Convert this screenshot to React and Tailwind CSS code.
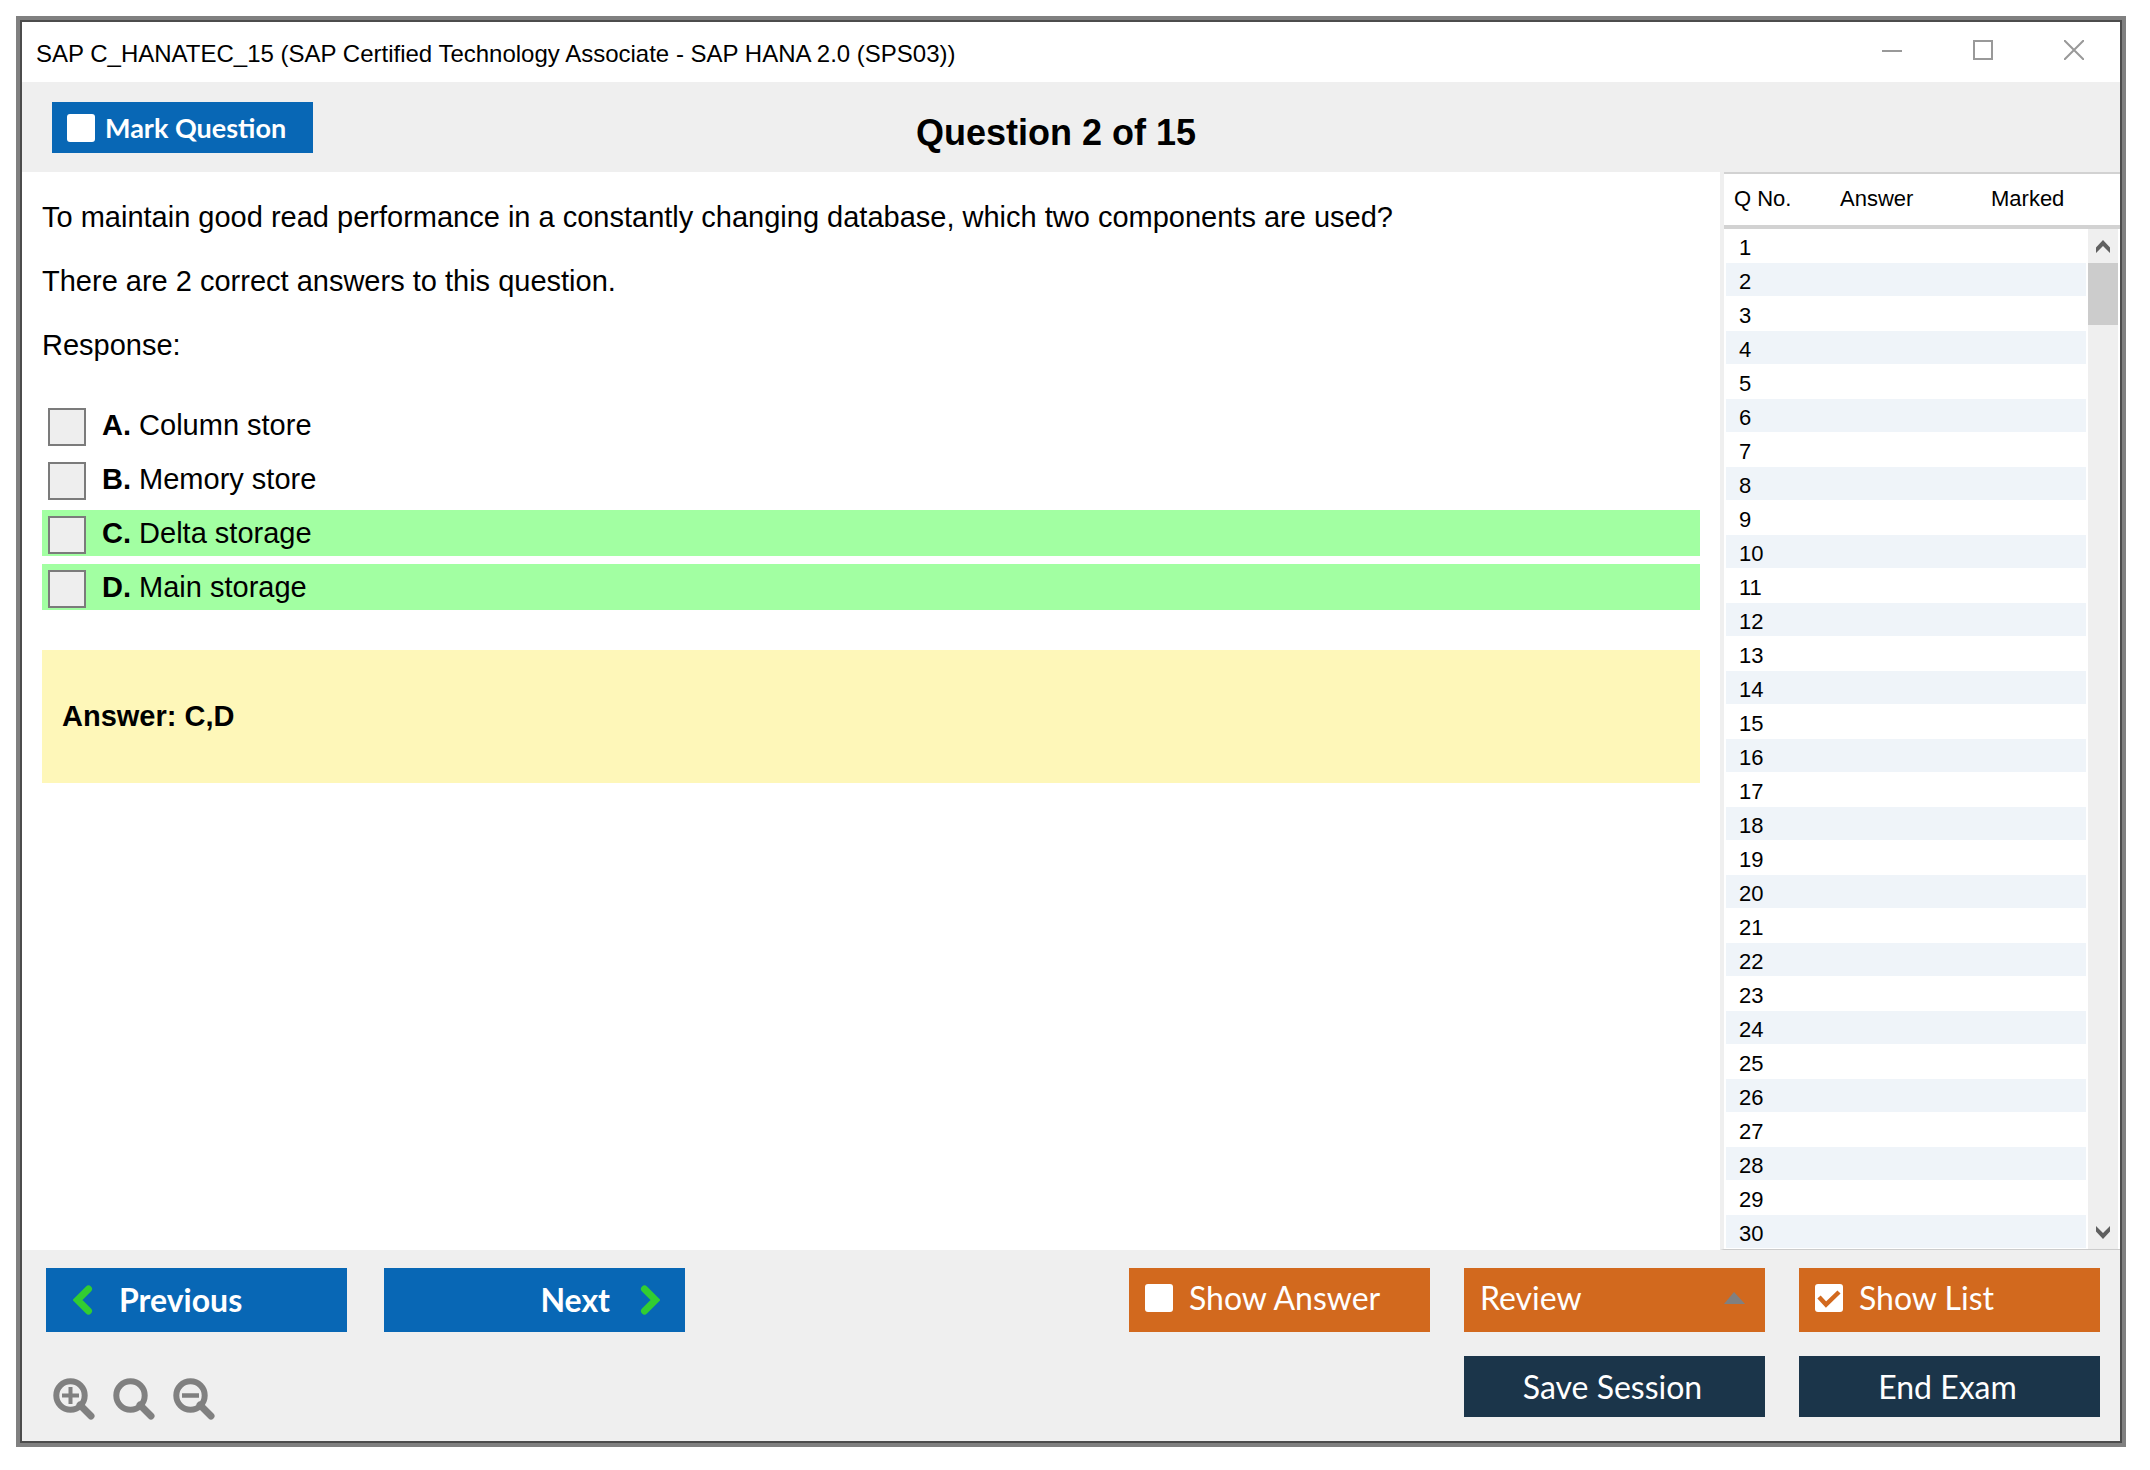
import { useState } from 'react'

const options = [
  { key: 'A', label: 'Column store', correct: false },
  { key: 'B', label: 'Memory store', correct: false },
  { key: 'C', label: 'Delta storage', correct: true },
  { key: 'D', label: 'Main storage', correct: true },
]

const rows = Array.from({ length: 30 }, (_, i) => i + 1)

function TitleBar() {
  return (
    <header className="flex h-[60px] items-start justify-between bg-white pl-[14px]">
      <h1 className="pt-[18px] text-2xl leading-7">
        SAP C_HANATEC_15 (SAP Certified Technology Associate - SAP HANA 2.0 (SPS03))
      </h1>
      <div className="flex text-[#999999]">
        <button aria-label="Minimize" className="flex h-14 w-[92px] items-center justify-center">
          <svg className="h-5 w-5" viewBox="0 0 20 20" fill="none" stroke="currentColor" strokeWidth="2">
            <path d="M0 11H20" />
          </svg>
        </button>
        <button aria-label="Maximize" className="flex h-14 w-[90px] items-center justify-center">
          <svg className="h-5 w-5" viewBox="0 0 20 20" fill="none" stroke="currentColor" strokeWidth="2">
            <rect x="1" y="1" width="18" height="18" />
          </svg>
        </button>
        <button aria-label="Close" className="flex h-14 w-[92px] items-center justify-center">
          <svg className="h-5 w-5" viewBox="0 0 20 20" fill="none" stroke="currentColor" strokeWidth="2">
            <path d="M0 0L20 20M20 0L0 20" />
          </svg>
        </button>
      </div>
    </header>
  )
}

function CheckButton({ label, className, checked, onChange }) {
  return (
    <label className={`flex items-center whitespace-nowrap text-white ${className}`}>
      <span className="relative flex">
        <input
          type="checkbox"
          checked={checked}
          onChange={(e) => onChange(e.target.checked)}
          className="h-7 w-7 appearance-none rounded-[3px] bg-white"
        />
        {checked && (
          <svg
            className="pointer-events-none absolute inset-0 h-7 w-7 text-[#d2691e]"
            viewBox="0 0 28 28"
            fill="none"
            stroke="currentColor"
            strokeWidth="4.5"
          >
            <path d="M4 13L11 20.5L24 8" />
          </svg>
        )}
      </span>
      {label}
    </label>
  )
}

function QuestionList() {
  return (
    <aside className="flex w-[400px] shrink-0 border-b border-l-4 border-b-[#cccccc] border-l-[#efefef] bg-white text-[22px] leading-7">
      <table className="flex-1 border-separate border-spacing-0 text-left">
        <thead>
          <tr>
            <th className="h-[57px] w-[116px] border-b-4 border-t-2 border-[#d2d2d2] pb-0.5 pl-[10px] font-normal">Q No.</th>
            <th className="w-[151px] border-b-4 border-t-2 border-[#d2d2d2] pb-0.5 font-normal">Answer</th>
            <th className="border-b-4 border-t-2 border-[#d2d2d2] pb-0.5 font-normal">Marked</th>
          </tr>
        </thead>
        <tbody>
          {rows.map((n) => (
            <tr key={n} className="even:bg-[#eff4f9]">
              <td className="h-[34px] border-b border-l-2 border-white pl-[13px] pt-1">{n}</td>
              <td className="border-b border-white" />
              <td className="border-b border-r-2 border-white" />
            </tr>
          ))}
        </tbody>
      </table>
      <div className="flex w-8 flex-col">
        <div className="h-[57px] border-b-4 border-t-2 border-[#d2d2d2]" />
        <div className="mr-[2px] flex flex-1 flex-col bg-[#efefef] text-[#606060]">
          <button aria-label="Scroll up" className="flex h-[34px] items-center justify-center">
            <svg className="h-[13px] w-4" viewBox="0 0 16 13" fill="currentColor">
              <path d="M8 0L15 7.5V13L8 6L1 13V7.5Z" />
            </svg>
          </button>
          <div className="h-[62px] bg-[#cccccc]" />
          <button aria-label="Scroll down" className="mt-auto flex h-[34px] items-center justify-center">
            <svg className="h-[13px] w-4" viewBox="0 0 16 13" fill="currentColor">
              <path d="M8 13L15 5.5V0L8 7L1 0V5.5Z" />
            </svg>
          </button>
        </div>
      </div>
    </aside>
  )
}

function ZoomIcon({ children }) {
  return (
    <svg className="h-[42px] w-[42px]" viewBox="0 0 42 42" fill="none" stroke="currentColor">
      <circle cx="17.5" cy="17.5" r="14.2" strokeWidth="6" />
      <path d="M27 27L38 38" strokeWidth="7" strokeLinecap="round" />
      {children}
    </svg>
  )
}

export default function App() {
  const [marked, setMarked] = useState(false)
  const [showAnswer, setShowAnswer] = useState(false)
  const [showList, setShowList] = useState(true)

  return (
    <div className="flex min-h-screen flex-col bg-white pb-6 pl-4 pr-6 pt-4 font-['Liberation_Sans',Arial,sans-serif] text-black">
      <div className="flex flex-1 flex-col border-4 border-[#808080]">
        <div className="flex flex-1 flex-col border-2 border-[#4c4c4c] bg-[#efefef]">
          <TitleBar />

          <div className="grid h-[90px] grid-cols-[1fr_auto_1fr] items-center pl-[30px] pr-[60px]">
            <CheckButton
              label="Mark Question"
              checked={marked}
              onChange={setMarked}
              className="h-[51px] w-[261px] gap-[10px] bg-[#0867b5] pl-[15px] pt-0.5 font-['Lato',sans-serif] text-[27px] font-bold"
            />
            <h2 className="pt-3 text-[36px] font-bold leading-10">Question 2 of 15</h2>
          </div>

          <div className="flex flex-1">
            <main className="flex-1 bg-white p-5 text-[29px] leading-[34px]">
              <div className="flex flex-col gap-[30px] pt-2">
                <p>To maintain good read performance in a constantly changing database, which two components are used?</p>
                <p>There are 2 correct answers to this question.</p>
                <p>Response:</p>
              </div>

              <div className="mt-10 flex flex-col gap-2">
                {options.map((o) => (
                  <label
                    key={o.key}
                    className={`flex h-[46px] items-center gap-4 pl-[6px] ${o.correct ? 'bg-[#a2ffa2]' : ''}`}
                  >
                    <input
                      type="checkbox"
                      className="mt-1 h-[38px] w-[38px] appearance-none border-2 border-[#7b7b7b] bg-[#eeeeee]"
                    />
                    <span>
                      <b>{o.key}.</b> {o.label}
                    </span>
                  </label>
                ))}
              </div>

              <div className="mt-10 flex h-[133px] items-center bg-[#fef7b9] px-5 pb-0.5 font-bold">Answer: C,D</div>
            </main>
            {showList && <QuestionList />}
          </div>

          <footer className="flex items-start justify-between pb-[21px] pl-6 pr-5 pt-[18px] font-['Lato',sans-serif] text-[32px] leading-10 text-white">
            <div className="flex flex-col gap-[46px]">
              <div className="flex gap-[37px] font-bold">
                <button className="flex h-16 w-[301px] items-center gap-[26px] bg-[#0867b5] pl-[27px]">
                  <svg
                    className="h-[30px] w-5 text-[#32cd32]"
                    viewBox="0 0 20 30"
                    fill="none"
                    stroke="currentColor"
                    strokeWidth="7"
                    strokeLinecap="round"
                  >
                    <path d="M15.5 4L4.5 15L15.5 26" />
                  </svg>
                  Previous
                </button>
                <button className="flex h-16 w-[301px] items-center justify-end gap-[30px] bg-[#0867b5] pr-[25px]">
                  Next
                  <svg
                    className="h-[30px] w-5 text-[#32cd32]"
                    viewBox="0 0 20 30"
                    fill="none"
                    stroke="currentColor"
                    strokeWidth="7"
                    strokeLinecap="round"
                  >
                    <path d="M4.5 4L15.5 15L4.5 26" />
                  </svg>
                </button>
              </div>
              <div className="flex gap-[18px] pl-[7px] text-[#808080]">
                <button aria-label="Zoom in">
                  <ZoomIcon>
                    <path d="M9 17.5H26M17.5 9V26" strokeWidth="4" />
                  </ZoomIcon>
                </button>
                <button aria-label="Reset zoom">
                  <ZoomIcon />
                </button>
                <button aria-label="Zoom out">
                  <ZoomIcon>
                    <path d="M9 17.5H26" strokeWidth="4.5" />
                  </ZoomIcon>
                </button>
              </div>
            </div>

            <div className="grid grid-cols-3 gap-x-[34px] gap-y-6">
              <CheckButton
                label="Show Answer"
                checked={showAnswer}
                onChange={setShowAnswer}
                className="h-16 w-[301px] gap-4 bg-[#d2691e] pb-1 pl-4"
              />
              <div className="relative">
                <select aria-label="Review" className="h-16 w-[301px] appearance-none bg-[#d2691e] px-4 pb-1">
                  <option>Review</option>
                </select>
                <svg className="pointer-events-none absolute right-5 top-6 h-3 w-[21px] text-[#808080]" viewBox="0 0 21 12" fill="currentColor">
                  <path d="M0 12L10 0L21 12Z" />
                </svg>
              </div>
              <CheckButton
                label="Show List"
                checked={showList}
                onChange={setShowList}
                className="h-16 w-[301px] gap-4 bg-[#d2691e] pb-1 pl-4"
              />
              <button className="col-start-2 h-[61px] bg-[#1b354a] pr-1">Save Session</button>
              <button className="h-[61px] bg-[#1b354a] pr-1">End Exam</button>
            </div>
          </footer>
        </div>
      </div>
    </div>
  )
}
